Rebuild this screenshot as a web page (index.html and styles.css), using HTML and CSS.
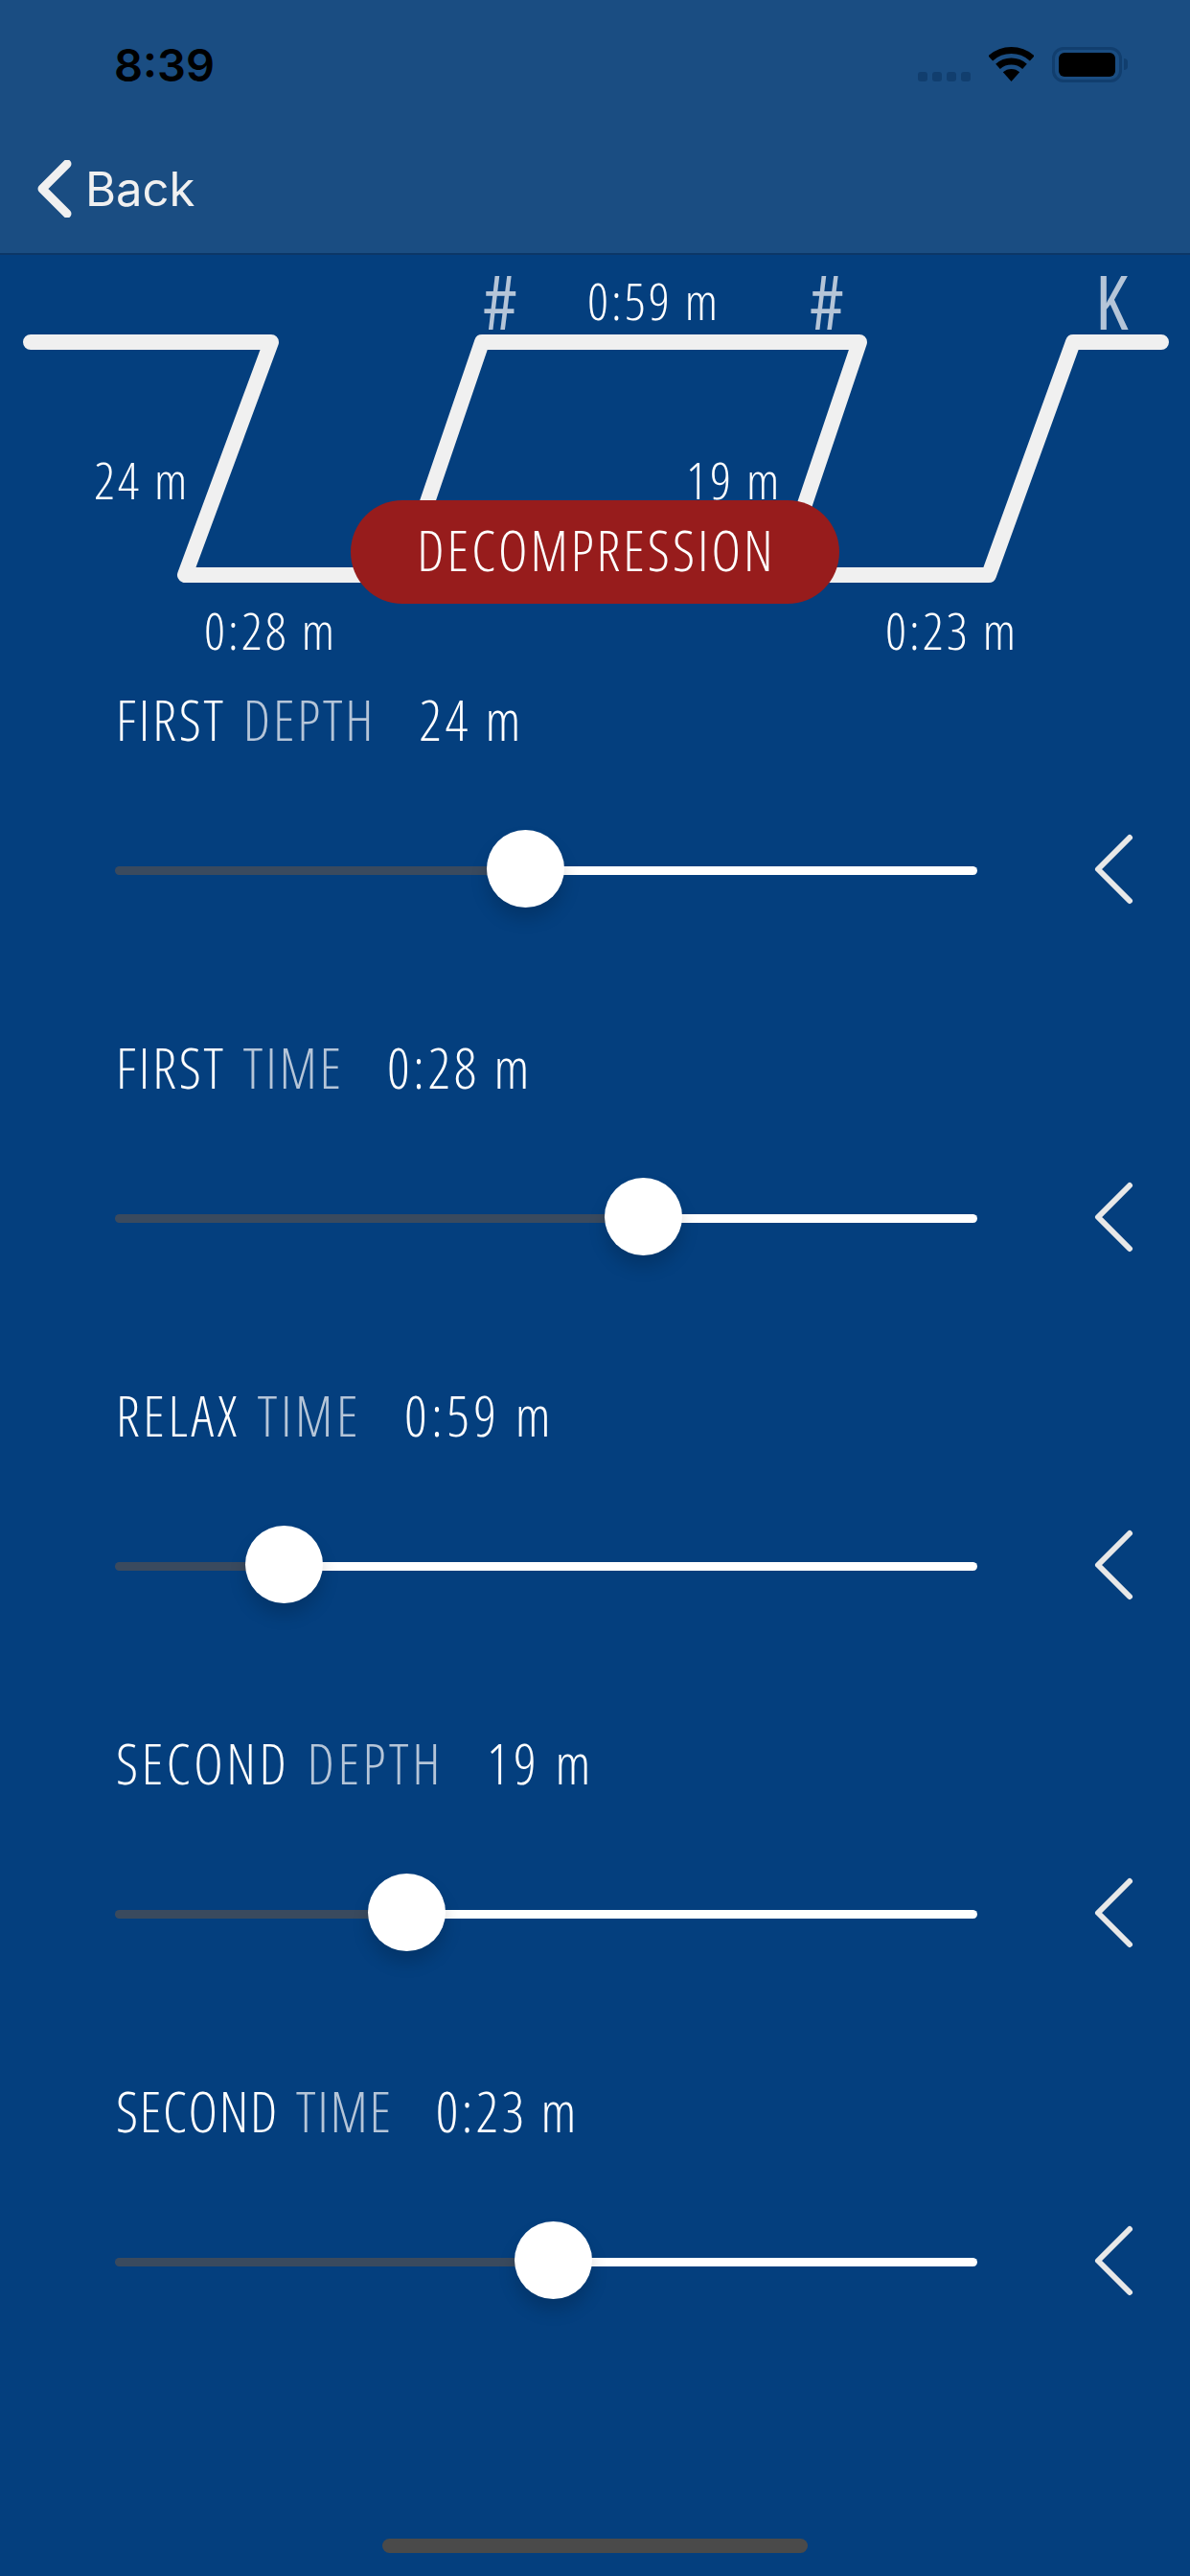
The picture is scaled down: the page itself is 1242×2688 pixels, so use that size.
FILE: index.html
```html
<!DOCTYPE html>
<html lang="en">
<head>
    <meta charset="UTF-8">
    <title>Decompression</title>
    <link rel="stylesheet" href="styles.css">
</head>
<body>
    <div class="topbar">
        <div class="status">
            <span class="time">8:39</span>
            <div class="status-icons">
                <div class="signal"><i></i><i></i><i></i><i></i></div>
                <svg class="wifi" width="47" height="36" viewBox="0 0 47 36">
                    <path d="M1.8 11.9A32.5 32.5 0 0 1 45.2 11.9" fill="none" stroke="#000" stroke-width="7"/>
                    <path d="M9.5 20.4A21 21 0 0 1 37.5 20.4" fill="none" stroke="#000" stroke-width="7"/>
                    <path d="M23.5 36L14.8 26.3A13 13 0 0 1 32.2 26.3Z" fill="#000"/>
                </svg>
                <div class="battery"><div class="battery-level"></div></div>
                <div class="battery-nub"></div>
            </div>
        </div>
        <div class="nav">
            <svg class="back-icon" width="36" height="60" viewBox="0 0 36 60">
                <path d="M31 4L5 30L31 56" fill="none" stroke="#f0f0f0" stroke-width="9" stroke-linecap="round" stroke-linejoin="round"/>
            </svg>
            <span class="back-label">Back</span>
        </div>
    </div>

    <div class="profile">
        <svg class="profile-line" width="1242" height="380" viewBox="0 264 1242 380">
            <path d="M32 357H283L193 600H420L503 357H897L815 600H1032L1120 357H1212" fill="none" stroke="#f0f0f0" stroke-width="16" stroke-linecap="round" stroke-linejoin="round"/>
        </svg>
        <span class="mark mark-a">#</span>
        <span class="tag tag-relax">0:59 m</span>
        <span class="mark mark-b">#</span>
        <span class="mark mark-c">K</span>
        <span class="tag tag-depth1">24 m</span>
        <span class="tag tag-depth2">19 m</span>
        <span class="tag tag-time1">0:28 m</span>
        <span class="tag tag-time2">0:23 m</span>
        <div class="badge">DECOMPRESSION</div>
    </div>

    <div class="sliders">
        <div class="row">
            <div class="caption"><span>FIRST</span><span class="dim">DEPTH</span><span class="value">24 m</span></div>
            <div class="control">
                <div class="track" style="--pos: 47.5%"><div class="thumb"></div></div>
                <svg class="step" width="44" height="76" viewBox="0 0 44 76"><path d="M38 5L5 38L38 71" fill="none" stroke="#e8e8e8" stroke-width="6" stroke-linecap="round" stroke-linejoin="round"/></svg>
            </div>
        </div>
        <div class="row">
            <div class="caption"><span>FIRST</span><span class="dim">TIME</span><span class="value">0:28 m</span></div>
            <div class="control">
                <div class="track" style="--pos: 61.2%"><div class="thumb"></div></div>
                <svg class="step" width="44" height="76" viewBox="0 0 44 76"><path d="M38 5L5 38L38 71" fill="none" stroke="#e8e8e8" stroke-width="6" stroke-linecap="round" stroke-linejoin="round"/></svg>
            </div>
        </div>
        <div class="row">
            <div class="caption caption-wide"><span>RELAX</span><span class="dim">TIME</span><span class="value">0:59 m</span></div>
            <div class="control">
                <div class="track" style="--pos: 19.5%"><div class="thumb"></div></div>
                <svg class="step" width="44" height="76" viewBox="0 0 44 76"><path d="M38 5L5 38L38 71" fill="none" stroke="#e8e8e8" stroke-width="6" stroke-linecap="round" stroke-linejoin="round"/></svg>
            </div>
        </div>
        <div class="row">
            <div class="caption caption-wide"><span>SECOND</span><span class="dim">DEPTH</span><span class="value">19 m</span></div>
            <div class="control">
                <div class="track" style="--pos: 33.8%"><div class="thumb"></div></div>
                <svg class="step" width="44" height="76" viewBox="0 0 44 76"><path d="M38 5L5 38L38 71" fill="none" stroke="#e8e8e8" stroke-width="6" stroke-linecap="round" stroke-linejoin="round"/></svg>
            </div>
        </div>
        <div class="row">
            <div class="caption caption-tight"><span>SECOND</span><span class="dim">TIME</span><span class="value">0:23 m</span></div>
            <div class="control">
                <div class="track" style="--pos: 50.8%"><div class="thumb"></div></div>
                <svg class="step" width="44" height="76" viewBox="0 0 44 76"><path d="M38 5L5 38L38 71" fill="none" stroke="#e8e8e8" stroke-width="6" stroke-linecap="round" stroke-linejoin="round"/></svg>
            </div>
        </div>
    </div>

    <div class="home-bar"></div>
</body>
</html>
```

FILE: styles.css
```css
* {
    margin: 0;
    padding: 0;
    box-sizing: border-box;
}

html, body {
    width: 1242px;
    height: 2688px;
    overflow: hidden;
}

body {
    position: relative;
    background: #043f7e;
    color: white;
    font-family: "Open Sans", "Lato", sans-serif;
    font-stretch: 75%;
    font-weight: 300;
}

.topbar {
    height: 266px;
    background: #1a4d82;
    border-bottom: 2px solid #0c3767;
    font-stretch: 100%;
}

.status {
    height: 135px;
    display: flex;
    justify-content: space-between;
    padding: 48px 65px 0 119px;
}

.time {
    font-family: "Inter", sans-serif;
    font-size: 47px;
    font-weight: 600;
    line-height: 40px;
    color: black;
}

.status-icons {
    display: flex;
    align-items: flex-start;
    height: 40px;
}

.signal {
    display: flex;
    gap: 5px;
    margin: 27px 19px 0 0;
}

.signal i {
    width: 10px;
    height: 10px;
    border-radius: 3px;
    background: #113e6e;
}

.wifi {
    margin: 1px 19px 0 0;
}

.battery {
    width: 73px;
    height: 37px;
    margin-top: 1px;
    padding: 3px 4px;
    border: 3px solid #113e6e;
    border-radius: 12px;
}

.battery-level {
    height: 100%;
    background: black;
    border-radius: 6px;
}

.battery-nub {
    width: 4px;
    height: 12px;
    margin: 13px 0 0 2px;
    background: #113e6e;
    border-radius: 0 6px 6px 0;
}

.nav {
    display: flex;
    align-items: center;
    height: 128px;
    padding-left: 39px;
    padding-bottom: 4px;
}

.back-label {
    margin-left: 14px;
    font-family: "Inter", sans-serif;
    font-size: 49px;
    font-weight: 400;
    color: #f0f0f0;
}

.profile {
    position: relative;
    height: 455px;
}

.profile-line {
    position: absolute;
    top: -2px;
    left: 0;
}

.tag, .mark {
    position: absolute;
    font-size: 54px;
    letter-spacing: 3px;
    line-height: 60px;
    white-space: nowrap;
}

.mark {
    font-size: 78px;
    letter-spacing: 0;
    line-height: 80px;
    font-weight: 400;
    color: #b5c5d8;
}

.mark-a { left: 504px; top: 8px; }
.mark-b { left: 845px; top: 8px; }
.mark-c { left: 1143px; top: 8px; }
.tag-relax { left: 613px; top: 17px; }
.tag-depth1 { left: 98px; top: 204px; }
.tag-depth2 { left: 716px; top: 204px; }
.tag-time1 { left: 213px; top: 361px; }
.tag-time2 { left: 924px; top: 361px; }

.badge {
    position: absolute;
    left: 366px;
    top: 256px;
    width: 510px;
    height: 108px;
    padding: 0 0 6px 3px;
    display: flex;
    align-items: center;
    justify-content: center;
    border-radius: 54px;
    background: #971c1c;
    font-size: 58px;
    letter-spacing: 3px;
}

.sliders {
    display: flex;
    flex-direction: column;
    padding-left: 120px;
}

.row {
    height: 363px;
}

.caption {
    display: flex;
    gap: 18px;
    padding-left: 1px;
    height: 60px;
    font-size: 58px;
    letter-spacing: 2.8px;
    line-height: 60px;
}

.caption .dim {
    color: #b5c5d8;
}

.caption .value {
    margin-left: 27px;
    letter-spacing: 3.7px;
}

.caption-wide {
    letter-spacing: 3.6px;
}

.caption-wide .value {
    letter-spacing: 4.5px;
}

.caption-tight {
    letter-spacing: 1.7px;
}

.caption-tight .value {
    letter-spacing: 3.3px;
}

.control {
    display: flex;
    align-items: center;
    height: 81px;
    margin-top: 85px;
}

.track {
    position: relative;
    width: 900px;
    height: 9px;
    margin-top: 3px;
    border-radius: 5px;
    background: linear-gradient(to right, #3a4a5e var(--pos), white var(--pos));
}

.thumb {
    position: absolute;
    left: var(--pos);
    top: -38px;
    width: 81px;
    height: 81px;
    margin-left: -40px;
    border-radius: 50%;
    background: white;
    box-shadow: 0 12px 18px rgba(0, 0, 0, 0.16);
}

.step {
    margin-left: 121px;
}

.home-bar {
    position: absolute;
    left: 399px;
    top: 2649px;
    width: 444px;
    height: 15px;
    border-radius: 8px;
    background: #4a4a4a;
}
```
